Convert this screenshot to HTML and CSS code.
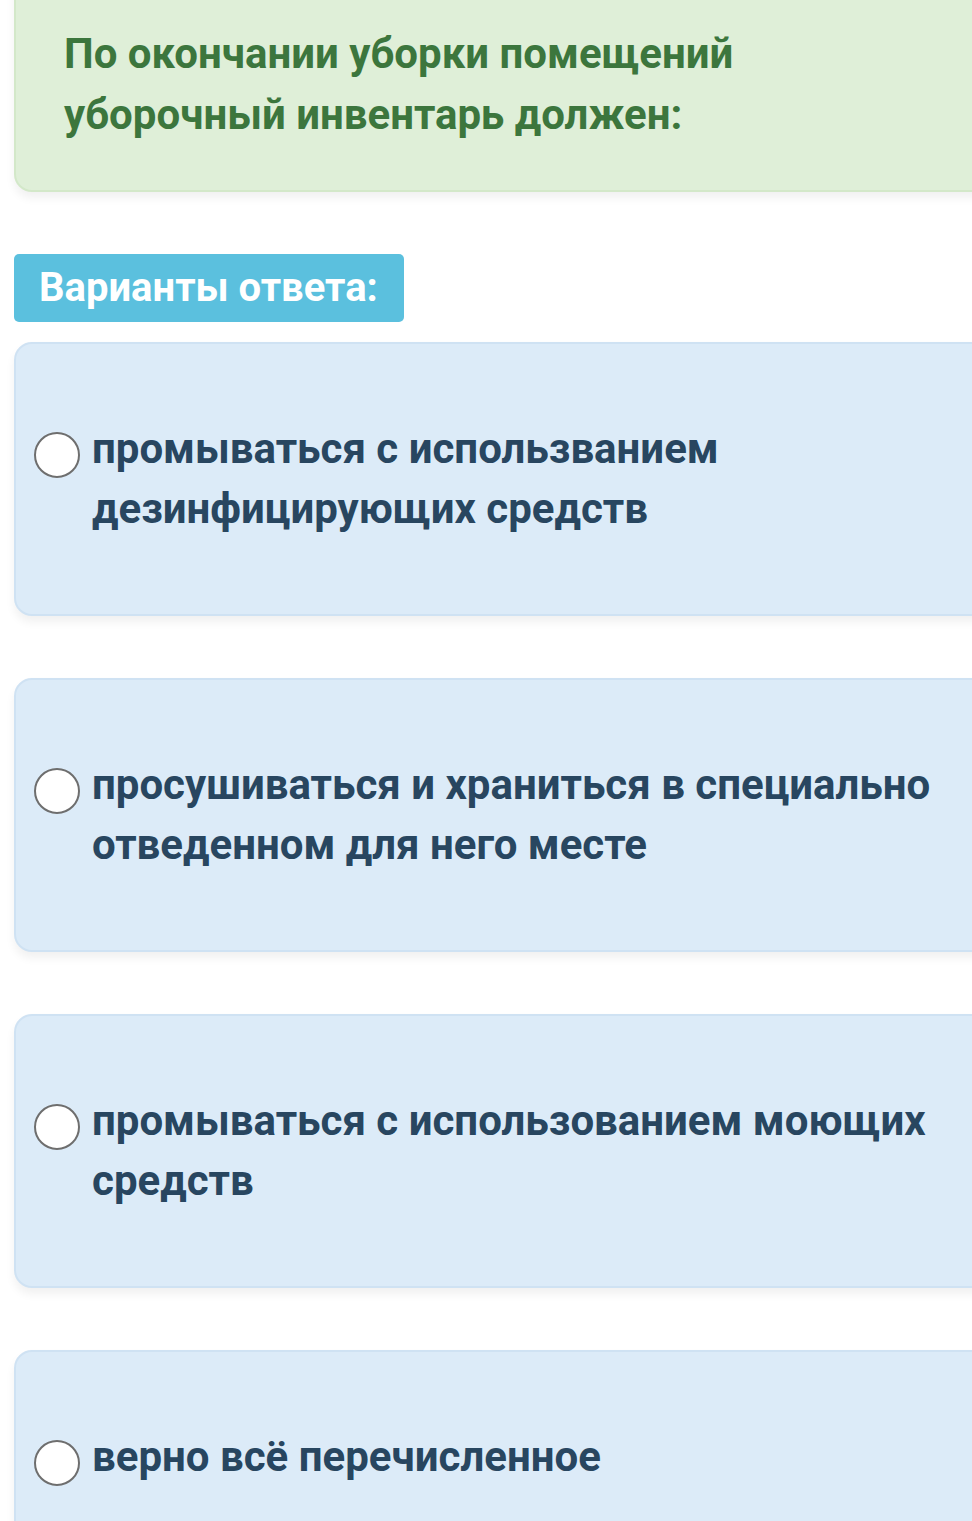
FILE: index.html
```html
<!DOCTYPE html>
<html lang="ru">
  <head>
    <meta charset="UTF-8" />
    <meta name="viewport" content="width=device-width, initial-scale=1.0" />
    <title>Тест</title>
    <link rel="stylesheet" href="styles.css">
  </head>
  <body>
    <div class="page">
      <div class="question">
        По окончании уборки помещений уборочный инвентарь должен:
      </div>

      <div class="answers-label">Варианты ответа:</div>

      <div class="answers">
        <label class="answer">
          <span class="radio"></span>
          <span class="answer-text">промываться с использванием дезинфицирующих средств</span>
        </label>
        <label class="answer">
          <span class="radio"></span>
          <span class="answer-text">просушиваться и храниться в специально отведенном для него месте</span>
        </label>
        <label class="answer">
          <span class="radio"></span>
          <span class="answer-text">промываться с использованием моющих средств</span>
        </label>
        <label class="answer">
          <span class="radio"></span>
          <span class="answer-text">верно всё перечисленное</span>
        </label>
      </div>
    </div>
  </body>
</html>
```

FILE: styles.css
```css
html,
body {
  margin: 0;
  padding: 0;
  overflow: hidden;
  background-color: #ffffff;
}

body {
  font-family: "Roboto", "Liberation Sans", sans-serif;
  font-weight: 700;
}

.page {
  padding-left: 14px;
  margin-right: -40px;
}

.question {
  background-color: #dfefd8;
  color: #3c763d;
  font-size: 42px;
  line-height: 61px;
  padding: 41px 120px 45px 48px;
  margin-top: -20px;
  border: 2px solid #d3e8c9;
  border-radius: 0 0 18px 18px;
  box-shadow: 0 6px 10px rgba(0, 0, 0, 0.06);
}

.answers-label {
  display: inline-block;
  margin-top: 62px;
  background-color: #5bc0de;
  color: #ffffff;
  font-size: 40px;
  line-height: 68px;
  padding: 0 26px 0 25px;
  border-radius: 5px;
}

.answers {
  margin-top: 20px;
  display: flex;
  flex-direction: column;
  gap: 62px;
}

.answer {
  display: flex;
  align-items: flex-start;
  gap: 12px;
  min-height: 274px;
  box-sizing: border-box;
  padding: 75px 20px 40px 18px;
  background-color: #dcebf8;
  border: 2px solid #cfe2f3;
  border-radius: 18px;
  box-shadow: 0 6px 10px rgba(0, 0, 0, 0.06);
  color: #284660;
  font-size: 42px;
  line-height: 60px;
}

.answer .radio {
  flex: none;
  width: 42px;
  height: 42px;
  margin-top: 13px;
  border: 2px solid #6e6e6e;
  border-radius: 50%;
  background-color: #ffffff;
}

.answer-text {
  max-width: 870px;
}
```
